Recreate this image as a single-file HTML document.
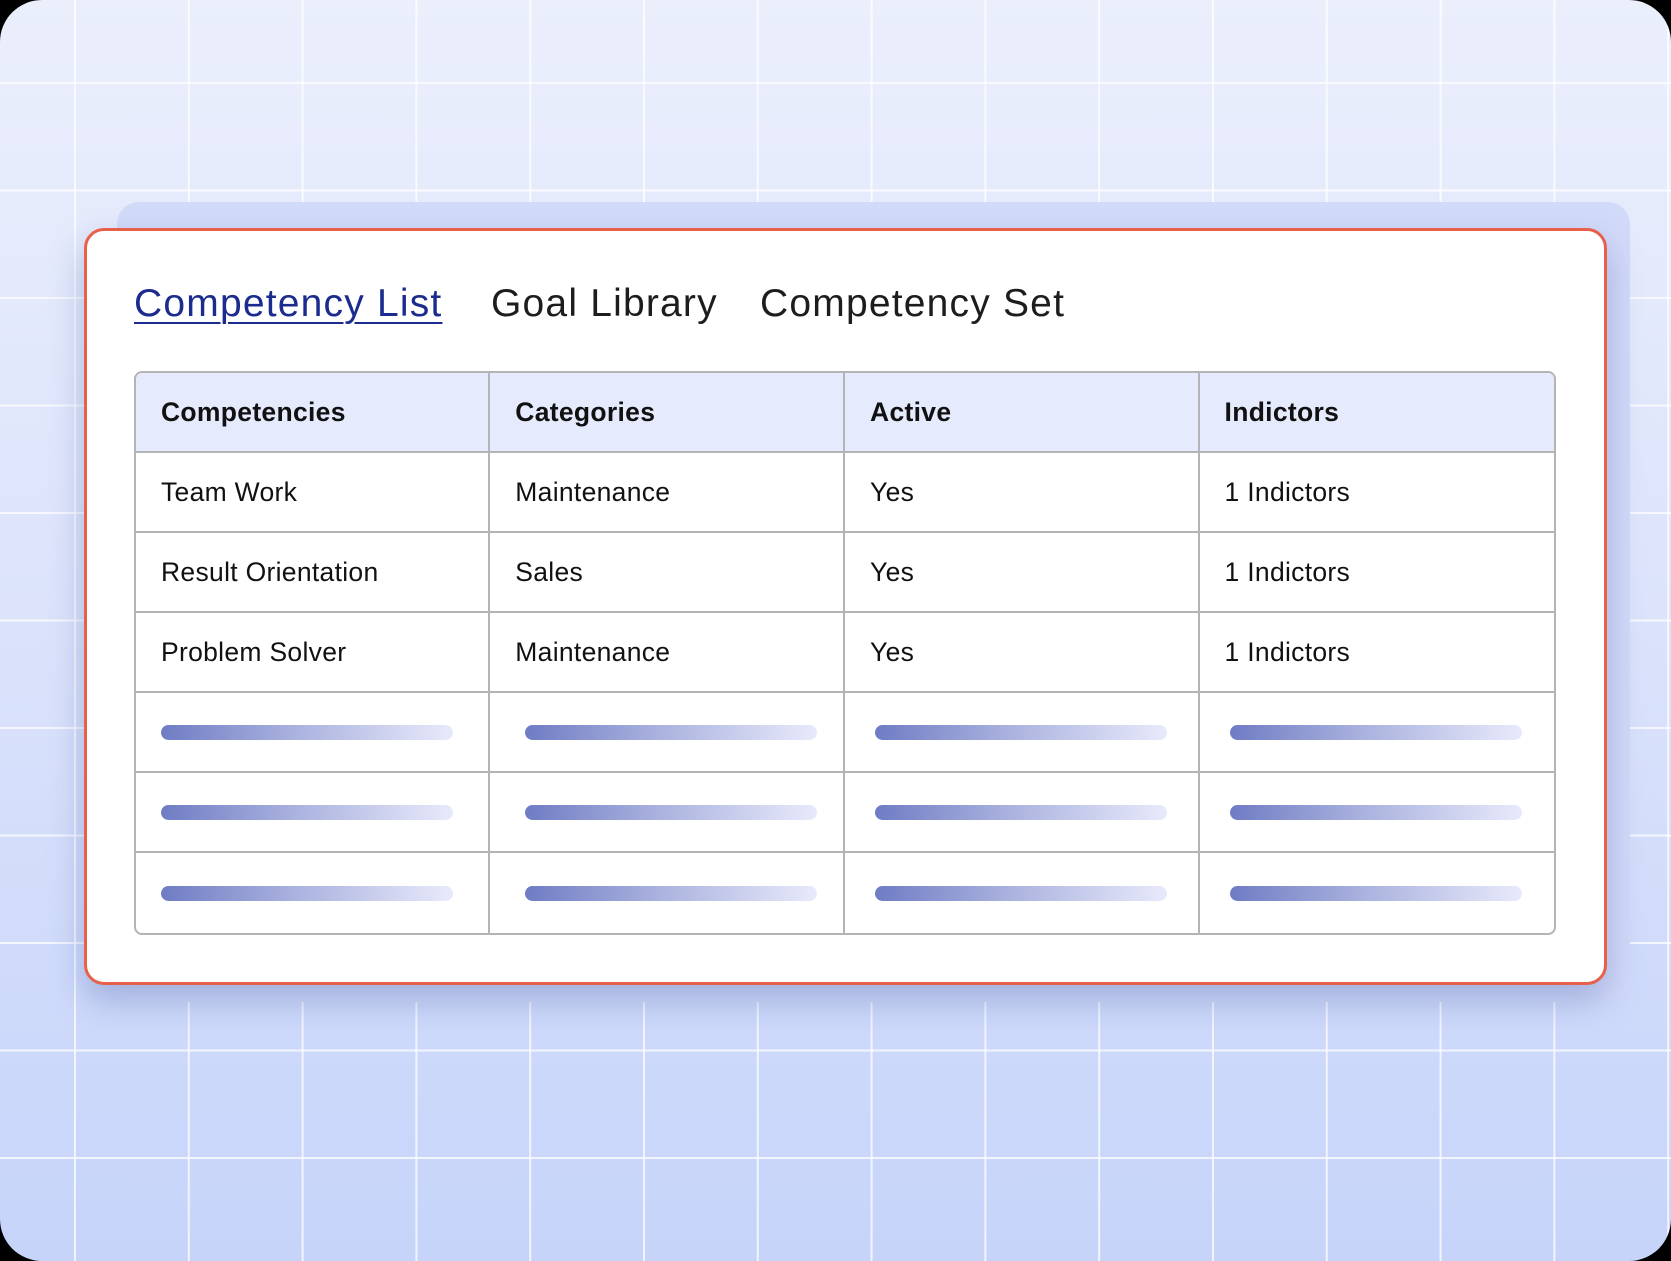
<!DOCTYPE html>
<html><head><meta charset="utf-8"><style>
html,body{margin:0;padding:0;background:#000;}
#pg{position:relative;width:1671px;height:1261px;overflow:hidden;border-radius:42px;
background-color:#dfe6fc;
background-image:
linear-gradient(to right, rgba(255,255,255,0.75) 0 2px, transparent 2px),
linear-gradient(to bottom, rgba(255,255,255,0.75) 0 2px, transparent 2px),
linear-gradient(to bottom,#ebeffc 0%,#dde4fb 45%,#c6d4fa 100%);
background-size:113.8px 100%,100% 107.5px,100% 100%;
background-position:74px 0,0 82px,0 0;
font-family:"Liberation Sans",sans-serif;}
.back{position:absolute;left:117px;top:202px;width:1513px;height:800px;border-radius:22px;background:#d2daf9;}
.card{position:absolute;left:84px;top:228px;width:1517px;height:751px;border:3px solid #e8604a;border-radius:20px;background:#fff;box-shadow:0 16px 34px rgba(90,110,180,0.4);}
.tab{position:absolute;top:282px;font-size:39px;color:#1d1d1d;font-weight:500;letter-spacing:1.2px;}
.tab.a{color:#1b2b8e;text-decoration:underline;text-decoration-thickness:2px;text-underline-offset:6px;}
table{position:absolute;left:134px;top:371px;width:1422px;border-collapse:separate;border-spacing:0;border:2px solid #b4b4b4;border-radius:8px;overflow:hidden;}
td{height:80px;border-right:2px solid #b4b4b4;border-bottom:2px solid #b4b4b4;padding:0 0 0 25px;font-size:26.5px;color:#111;width:356px;box-sizing:border-box;letter-spacing:0.3px;}
td:last-child{border-right:none;}
tr:last-child td{border-bottom:none;}
tr.h td{background:#e5eafc;font-weight:bold;height:80px;}
.bar{height:15px;width:292px;border-radius:8px;background:linear-gradient(to right,#6f7cc4,#a9b1de 45%,#e8eafb);}
</style></head><body><div id="pg">
<div class="back"></div>
<div class="card"></div>
<div class="tab a" style="left:134px">Competency List</div>
<div class="tab" style="left:491px">Goal Library</div>
<div class="tab" style="left:760px">Competency Set</div>
<table>
<tr class="h"><td>Competencies</td><td>Categories</td><td>Active</td><td>Indictors</td></tr>
<tr><td>Team Work</td><td>Maintenance</td><td>Yes</td><td>1 Indictors</td></tr>
<tr><td>Result Orientation</td><td>Sales</td><td>Yes</td><td>1 Indictors</td></tr>
<tr><td>Problem Solver</td><td>Maintenance</td><td>Yes</td><td>1 Indictors</td></tr>
<tr><td><div class="bar"></div></td><td style="padding-left:35px"><div class="bar"></div></td><td style="padding-left:30px"><div class="bar"></div></td><td style="padding-left:30px"><div class="bar"></div></td></tr>
<tr><td><div class="bar"></div></td><td style="padding-left:35px"><div class="bar"></div></td><td style="padding-left:30px"><div class="bar"></div></td><td style="padding-left:30px"><div class="bar"></div></td></tr>
<tr><td><div class="bar"></div></td><td style="padding-left:35px"><div class="bar"></div></td><td style="padding-left:30px"><div class="bar"></div></td><td style="padding-left:30px"><div class="bar"></div></td></tr>
</table>
</div></body></html>
